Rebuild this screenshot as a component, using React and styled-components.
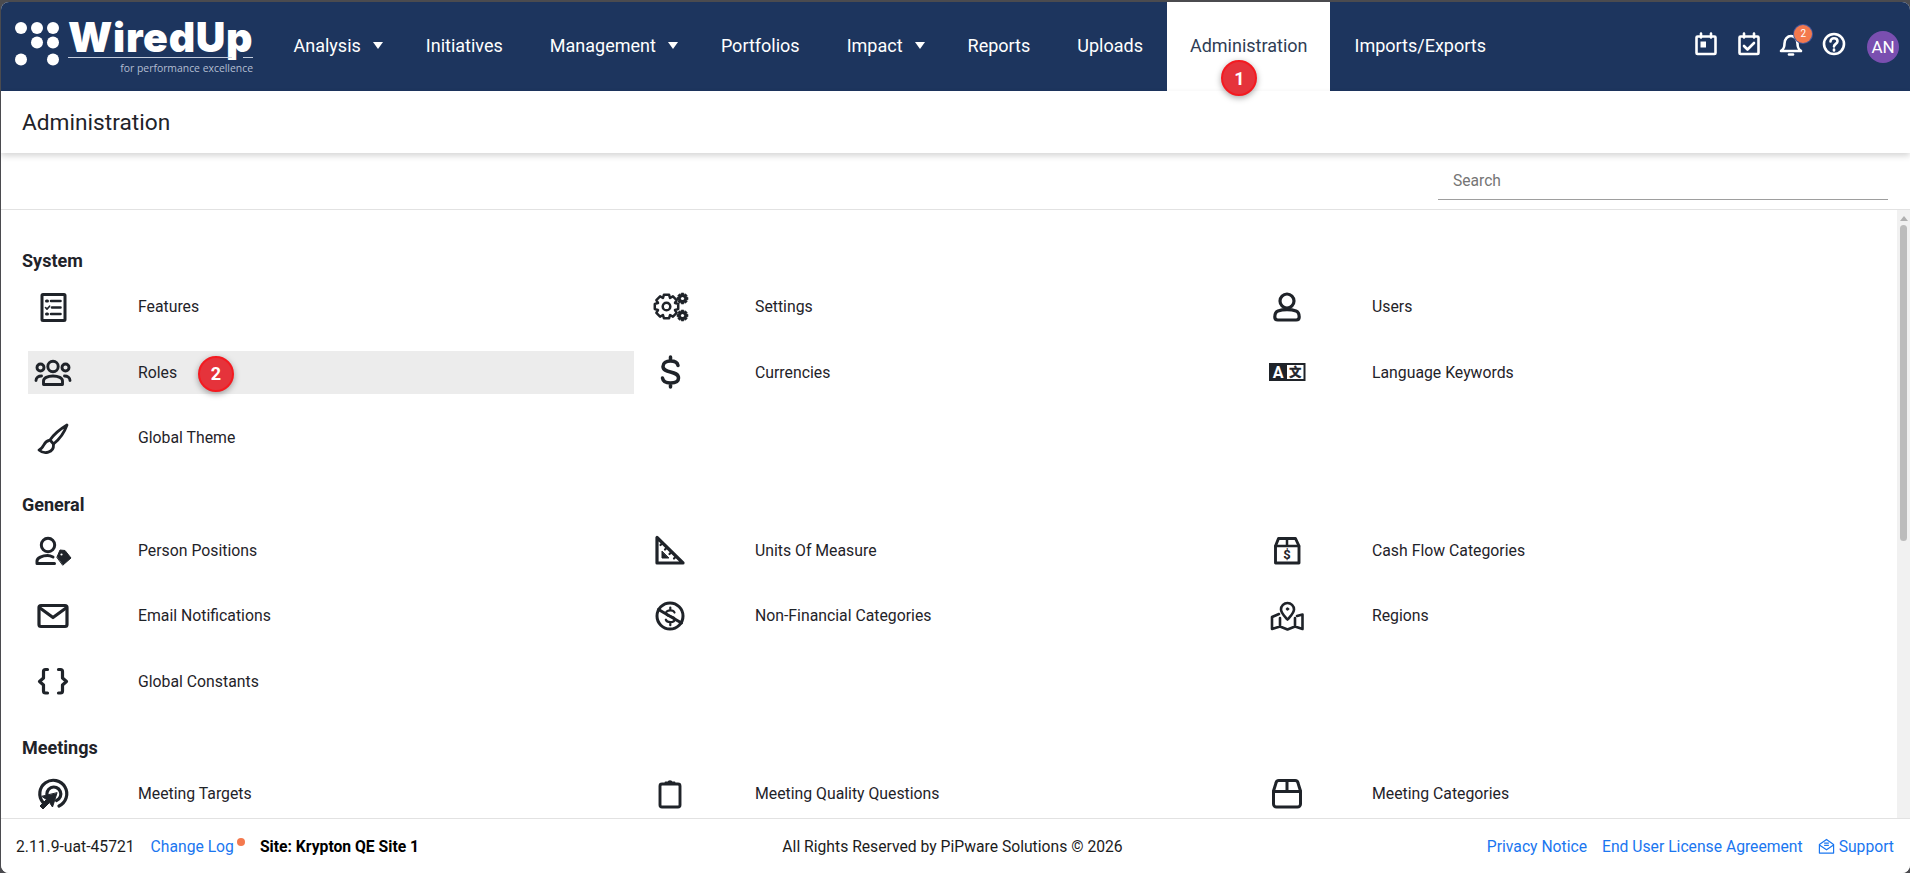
import React from "react";
import styled, { createGlobalStyle } from "styled-components";

/* WiredUp administration page: top nav, title, search, icon grid and footer. */

const INK = "#1f2329";
const NAVY = "#1d355e";
const LINK = "#1a76f0";

const GlobalStyle = createGlobalStyle`
  html, body {
    margin: 0;
    height: 100%;
    background: #4b4b4f;
    overflow: hidden;
  }
  #root {
    height: 100%;
  }
  * {
    box-sizing: border-box;
  }
`;

const LanguageGlyph = styled.text`
  fill: ${(p) => (p.$dark ? INK : "#fff")};
  stroke: ${(p) => (p.$dark ? INK : "none")};
  stroke-width: ${(p) => (p.$dark ? 0.5 : 0)};
  font-family: ${(p) => (p.$dark ? '"Noto Sans CJK SC"' : "Roboto")}, sans-serif;
  font-size: ${(p) => (p.$dark ? 12 : 16)}px;
  font-weight: 700;
  text-anchor: middle;
`;

const CashGlyph = styled.text`
  fill: ${INK};
  stroke: none;
  font-family: Roboto, sans-serif;
  font-size: 13px;
  font-weight: 700;
  text-anchor: middle;
`;

const gearPath = (cx, cy, outer, inner, teeth) => {
  const step = (Math.PI * 2) / teeth;
  const points = [];
  for (let i = 0; i < teeth; i++) {
    const a = i * step - Math.PI / 2;
    [
      [inner, -0.5],
      [outer, -0.28],
      [outer, 0.28],
      [inner, 0.5],
    ].forEach(([r, k]) => {
      const x = cx + r * Math.cos(a + k * step);
      const y = cy + r * Math.sin(a + k * step);
      points.push(`${x.toFixed(2)} ${y.toFixed(2)}`);
    });
  }
  return `M${points.join("L")}Z`;
};

const icons = {
  features: (
    <>
      <rect x="7" y="5.5" width="23" height="26" rx="1" strokeWidth="3" />
      <path d="M16 12h9.5M17 18.5h8.5M16 25h9.5" strokeWidth="2.6" />
      <path d="M11.5 12h1M11.5 25h1" strokeWidth="3" />
      <path d="M10.5 18.5l1.5 1.6 2.6-2.9" strokeWidth="1.6" />
    </>
  ),
  settings: (
    <>
      <path d={gearPath(14.5, 17.5, 12, 9.2, 8)} strokeWidth="2.5" />
      <circle cx="14.5" cy="17.5" r="3.8" strokeWidth="2.5" />
      <path d={gearPath(30.5, 9.5, 5.6, 4.1, 8)} fill={INK} strokeWidth="0.6" />
      <circle cx="30.5" cy="9.5" r="1.6" fill="#fff" stroke="none" />
      <path d={gearPath(30.5, 26.5, 5.6, 4.1, 8)} fill={INK} strokeWidth="0.6" />
      <circle cx="30.5" cy="26.5" r="1.6" fill="#fff" stroke="none" />
    </>
  ),
  users: (
    <>
      <circle cx="18" cy="12" r="7" strokeWidth="3.2" />
      <path d="M9 22c-3 1.2-3.2 3.6-3.2 6 0 2 1 3 3 3h18.4c2 0 3-1 3-3 0-2.4-.2-4.8-3.2-6-5-1.8-13-1.8-18 0z" strokeWidth="3.2" />
    </>
  ),
  roles: (
    <>
      <circle cx="18" cy="12.5" r="5.2" strokeWidth="2.9" />
      <circle cx="5.5" cy="13.5" r="3.5" strokeWidth="2.9" />
      <circle cx="30.5" cy="13.5" r="3.5" strokeWidth="2.9" />
      <path d="M8.5 30.5v-3.5c0-3 4-5 9.5-5s9.5 2 9.5 5v3.5z" strokeWidth="2.9" />
      <path d="M1 26.5c0-3 2.5-4.5 5.5-4.5M35 26.5c0-3-2.5-4.5-5.5-4.5" strokeWidth="2.9" />
    </>
  ),
  currency: (
    <path d="M26 11.5C25.5 8.5 22.5 7 18.5 7 14 7 11 9 11 12.5c0 3.5 3.5 4.5 7.5 5.5 4 1 8 2 8 6 0 3.5-3.5 5-8 5-4.5 0-7.5-1.5-8-5M18.5 3v4M18.5 29v4" strokeWidth="3.5" />
  ),
  language: (
    <>
      <rect x="0" y="9" width="36.5" height="18" fill={INK} stroke="none" />
      <rect x="18" y="11" width="16.5" height="14" fill="#fff" stroke="none" />
      <LanguageGlyph x="9" y="24" $dark={false}>
        A
      </LanguageGlyph>
      <LanguageGlyph x="26.3" y="23" $dark>
        文
      </LanguageGlyph>
    </>
  ),
  brush: (
    <>
      <path d="M32 5C27 8 19 14 15 20l3.5 4c5-4 11-12 13.5-19z" strokeWidth="2.8" />
      <path d="M14 20.5c-5.5.5-4.5 7.5-10 9.5 5 4.5 15 3 14.5-5.5" strokeWidth="2.8" />
    </>
  ),
  position: (
    <>
      <circle cx="13" cy="13" r="6.7" strokeWidth="3" />
      <path d="M18 25c-2-1-3.5-1.5-5.5-1.5-5 0-10.5 2.5-10.5 5.5v2.5h17.5" strokeWidth="3" />
      <path d="M22 25l3-7 5 .5 6 7.5-8 7z" fill={INK} strokeWidth="1" />
      <circle cx="26.5" cy="22.5" r="1.1" fill="#fff" stroke="none" />
    </>
  ),
  mail: (
    <>
      <rect x="4" y="7.5" width="28" height="21" rx="2" strokeWidth="3.2" />
      <path d="M5 10l13 9.5L31 10" strokeWidth="3.2" />
    </>
  ),
  braces: (
    <>
      <path d="M12.5 6.5H10.5a2 2 0 0 0-2 2V15l-4 3.5 4 3.5v6a2 2 0 0 0 2 2h2" strokeWidth="3.2" />
      <path d="M23.5 6.5h2a2 2 0 0 1 2 2V15l4 3.5-4 3.5v6a2 2 0 0 1-2 2h-2" strokeWidth="3.2" />
    </>
  ),
  target: (
    <>
      <path d="M8 26.5A13.5 13.5 0 1 1 24 30" strokeWidth="3.2" />
      <path d="M12.5 21A7 7 0 1 1 21.5 24.5" strokeWidth="3.2" />
      <path d="M22 17l-4.5 14-3-4.5-6.5 6.5-3-3 6.5-6.5-4.5-3z" fill={INK} strokeWidth="1" />
    </>
  ),
  ruler: (
    <>
      <path d="M5 5.5v25.5h26z" strokeWidth="3.2" />
      <path d="M10 19.5v6.5h6.5z" fill={INK} strokeWidth="1" />
      <path d="M10.5 11l-2 2M15 15.5l-2 2M19.5 20l-2 2M24 24.5l-2 2" strokeWidth="2.2" />
    </>
  ),
  noMoney: (
    <>
      <circle cx="18" cy="18" r="13" strokeWidth="3" />
      <path d="M6.5 11.5l23 13.5" strokeWidth="3" />
      <path d="M22.5 14.5c-.5-1.5-2-2.2-4.2-2.2-2.5 0-4.3 1.2-4.3 3 0 2 2 2.5 4.3 3 2.3.5 4.4 1 4.4 3 0 1.8-2 2.9-4.4 2.9-2.3 0-4-.9-4.5-2.5M18.3 9.5v3M18.3 24.2v3" strokeWidth="2.2" />
    </>
  ),
  cashBox: (
    <>
      <path d="M6.5 14l3-7.5h17l3.5 7.5v17h-23.5z" strokeWidth="2.9" />
      <path d="M6.5 14h23.5M18 6.5V14" strokeWidth="2.5" />
      <CashGlyph x="18" y="27">
        $
      </CashGlyph>
    </>
  ),
  map: (
    <>
      <path d="M18.5 21.5c-3-3.5-6.5-6.5-6.5-10a6.5 6.5 0 0 1 13 0c0 3.5-3.5 6.5-6.5 10z" strokeWidth="2.6" />
      <circle cx="18.5" cy="11" r="1.3" fill={INK} strokeWidth="0.8" />
      <path d="M10 16l-7 3v12l8-2.5 7.5 3 7.5-3 7.5 2.5V16.5L28 18M11 20v8.5M26 20v8.5" strokeWidth="2.6" />
    </>
  ),
  clipboard: (
    <>
      <rect x="8" y="8" width="20" height="23" rx="2" strokeWidth="2.9" />
      <path d="M13.5 8V6.5h2.5a2.2 2.2 0 0 1 4 0h2.5V8z" fill={INK} strokeWidth="1.8" />
    </>
  ),
  box: (
    <>
      <path d="M4.5 15V28a3 3 0 0 0 3 3h21a3 3 0 0 0 3-3V15l-2.5-8a3 3 0 0 0-3-2.5H10a3 3 0 0 0-3 2.5z" strokeWidth="3" />
      <path d="M4.5 15.5h27M18 4.5v11" strokeWidth="3" />
    </>
  ),
};

const sections = [
  {
    title: "System",
    items: [
      { label: "Features", icon: "features" },
      { label: "Settings", icon: "settings" },
      { label: "Users", icon: "users" },
      { label: "Roles", icon: "roles", active: true, marker: "2" },
      { label: "Currencies", icon: "currency" },
      { label: "Language Keywords", icon: "language" },
      { label: "Global Theme", icon: "brush" },
    ],
  },
  {
    title: "General",
    items: [
      { label: "Person Positions", icon: "position" },
      { label: "Units Of Measure", icon: "ruler" },
      { label: "Cash Flow Categories", icon: "cashBox" },
      { label: "Email Notifications", icon: "mail" },
      { label: "Non-Financial Categories", icon: "noMoney" },
      { label: "Regions", icon: "map" },
      { label: "Global Constants", icon: "braces" },
    ],
  },
  {
    title: "Meetings",
    items: [
      { label: "Meeting Targets", icon: "target" },
      { label: "Meeting Quality Questions", icon: "clipboard" },
      { label: "Meeting Categories", icon: "box" },
    ],
  },
];

const navItems = [
  { label: "Analysis", caret: true },
  { label: "Initiatives" },
  { label: "Management", caret: true },
  { label: "Portfolios" },
  { label: "Impact", caret: true },
  { label: "Reports" },
  { label: "Uploads" },
  { label: "Administration", active: true },
  { label: "Imports/Exports" },
];

const App = () => {
  return (
    <>
      <GlobalStyle />
      <Frame>
        <TopBar>
          <Logo>
            <LogoDots viewBox="0 0 48 50">
              <circle cx="6" cy="6" r="6" />
              <circle cx="22" cy="6" r="6" />
              <circle cx="38" cy="6" r="6" />
              <circle cx="22" cy="20.5" r="6" />
              <circle cx="38" cy="20.5" r="6" />
              <circle cx="6" cy="37.5" r="6" />
              <circle cx="38" cy="37.5" r="6" />
            </LogoDots>
            <LogoText>
              <LogoWord>WiredUp</LogoWord>
              <LogoRule>
                <span />
                <span />
              </LogoRule>
              <LogoTagline>for performance excellence</LogoTagline>
            </LogoText>
          </Logo>
          <NavList>
            {navItems.map((item) => (
              <NavItem key={item.label} $active={item.active} $caret={item.caret}>
                {item.label}
                {item.caret && <Caret />}
                {item.active && (
                  <Marker $left={54} $top={58}>
                    1
                  </Marker>
                )}
              </NavItem>
            ))}
          </NavList>
          <NavTools>
            <ToolIcon viewBox="0 0 24 24">
              <rect x="2.5" y="4.5" width="19" height="17.5" rx="1" />
              <path d="M7 1.5v4M17 1.5v4" />
              <rect x="6.5" y="9.5" width="5.5" height="6" fill="#fff" stroke="none" />
            </ToolIcon>
            <ToolIcon viewBox="0 0 24 24">
              <rect x="2.5" y="4.5" width="19" height="17.5" rx="1" />
              <path d="M7 1.5v4M17 1.5v4" />
              <path d="M7 14l3.5 3.5L17 11" />
            </ToolIcon>
            <Bell>
              <ToolIcon viewBox="0 0 24 24">
                <path d="M2 19c2-1.5 3.5-2.5 3.5-7.5C5.5 7 8.5 4 12 4s6.5 3 6.5 7.5c0 5 1.5 6 3.5 7.5z" />
                <path d="M10 22.5h4" />
              </ToolIcon>
              <BellCount>2</BellCount>
            </Bell>
            <ToolIcon viewBox="0 0 24 24">
              <circle cx="12" cy="12" r="10" />
              <path d="M8.5 9.5c0-2 1.5-3.3 3.5-3.3s3.5 1.2 3.5 3c0 2.6-3.5 2.7-3.5 5.3" />
              <path d="M12 17.5v1" />
            </ToolIcon>
            <Avatar>AN</Avatar>
          </NavTools>
        </TopBar>

        <PageHeader>
          <PageTitle>Administration</PageTitle>
        </PageHeader>

        <SearchBar>
          <SearchInput placeholder="Search" />
        </SearchBar>

        <Body>
          <Content>
            {sections.map((section) => (
              <section key={section.title}>
                <SectionTitle>{section.title}</SectionTitle>
                <ItemGrid>
                  {section.items.map((item) => (
                    <Item key={item.label} $active={item.active}>
                      <ItemIcon viewBox="0 0 36 36">{icons[item.icon]}</ItemIcon>
                      <ItemLabel>{item.label}</ItemLabel>
                      {item.marker && (
                        <Marker $left={170} $top={5}>
                          {item.marker}
                        </Marker>
                      )}
                    </Item>
                  ))}
                </ItemGrid>
              </section>
            ))}
          </Content>
          <ScrollTrack>
            <ScrollArrow />
            <ScrollThumb />
          </ScrollTrack>
        </Body>

        <Footer>
          <FooterLeft>
            <span>2.11.9-uat-45721</span>
            <ChangeLog>Change Log</ChangeLog>
            <SiteName>Site: Krypton QE Site 1</SiteName>
          </FooterLeft>
          <FooterCenter>All Rights Reserved by PiPware Solutions © 2026</FooterCenter>
          <FooterRight>
            <FooterLink>Privacy Notice</FooterLink>
            <FooterLink>End User License Agreement</FooterLink>
            <FooterLink>
              <SupportIcon viewBox="0 0 18 18">
                <path d="M1.5 7v9h15V7L9 1.5z" />
                <path d="M1.5 7.5L9 12.5l7.5-5" />
                <path d="M6.5 5.5h5M6.5 7.8h5" />
              </SupportIcon>
              Support
            </FooterLink>
          </FooterRight>
        </Footer>
      </Frame>
    </>
  );
};

const Frame = styled.div`
  margin: 2px 0 0 1px;
  height: calc(100% - 2px);
  display: flex;
  flex-direction: column;
  background: #fff;
  border-radius: 8px;
  overflow: hidden;
  font-family: Roboto, "Liberation Sans", sans-serif;
  color: ${INK};
`;

const TopBar = styled.header`
  flex: none;
  height: 89px;
  display: flex;
  align-items: stretch;
  background: ${NAVY};
`;

const Logo = styled.div`
  width: 269px;
  flex: none;
  display: flex;
  align-items: flex-start;
  padding: 17px 0 0 14px;
  color: #fff;
`;

const LogoDots = styled.svg`
  width: 48px;
  height: 50px;
  margin-top: 3px;
  flex: none;
  fill: #fff;
`;

const LogoText = styled.div`
  width: 185px;
  margin-left: 5px;
  display: flex;
  flex-direction: column;
`;

const LogoWord = styled.div`
  font-family: Inter, sans-serif;
  font-size: 41px;
  font-weight: 900;
  line-height: 37px;
  letter-spacing: 0.7px;
  white-space: nowrap;
`;

const LogoRule = styled.div`
  display: flex;
  justify-content: space-between;
  margin-top: 1px;

  span {
    display: block;
    height: 1px;
    background: #c4cddd;
    width: 164px;
  }

  span + span {
    width: 10px;
  }
`;

const LogoTagline = styled.div`
  margin-top: 4px;
  font-family: "Open Sans", sans-serif;
  font-size: 10.4px;
  line-height: 12px;
  text-align: right;
  color: #b3bed1;
  white-space: nowrap;
`;

const NavList = styled.nav`
  display: flex;
  align-items: stretch;
  flex: 1;
`;

const NavItem = styled.div`
  position: relative;
  display: flex;
  align-items: center;
  padding: ${(p) => (p.$caret ? "0 21.5px 2px 23.5px" : p.$active ? "0 22.5px 2px" : "0 23.5px 2px")};
  margin: ${(p) => (p.$active ? "0 1px" : "0")};
  font-size: 18px;
  color: ${(p) => (p.$active ? "#2f3d55" : "#fff")};
  background: ${(p) => (p.$active ? "#fff" : "transparent")};
  white-space: nowrap;
`;

const Caret = styled.i`
  width: 0;
  height: 0;
  margin: 0 -2px 0 12px;
  border-left: 5px solid transparent;
  border-right: 5px solid transparent;
  border-top: 7px solid #fff;
`;

const Marker = styled.span`
  position: absolute;
  left: ${(p) => p.$left}px;
  top: ${(p) => p.$top}px;
  width: 36px;
  height: 36px;
  display: flex;
  align-items: center;
  justify-content: center;
  border-radius: 50%;
  background: #e5333b;
  border: 2px solid #f41a20;
  box-shadow: 0 2px 6px rgba(0, 0, 0, 0.35);
  color: #fff;
  font-size: 18px;
  font-weight: 700;
  font-family: Roboto, sans-serif;
  z-index: 3;
`;

const NavTools = styled.div`
  display: flex;
  align-items: center;
  gap: 18.6px;
  padding: 0 11px 0 0;
`;

const ToolIcon = styled.svg`
  width: 24px;
  height: 24px;
  margin-bottom: 6px;
  fill: none;
  stroke: #fff;
  stroke-width: 2.6;
  stroke-linecap: round;
  stroke-linejoin: round;
  display: block;
`;

const Bell = styled.div`
  position: relative;
`;

const BellCount = styled.span`
  position: absolute;
  top: -7px;
  right: -9px;
  width: 18px;
  height: 18px;
  border-radius: 50%;
  background: #f4794e;
  box-shadow: 0 0 0 1px #4a5a9a;
  color: #fff;
  font-size: 10px;
  line-height: 18px;
  text-align: center;
`;

const Avatar = styled.div`
  width: 32px;
  height: 32px;
  margin-left: 2.4px;
  border-radius: 50%;
  background: #7a4fb0;
  color: #fff;
  font-size: 17px;
  display: flex;
  align-items: center;
  justify-content: center;
`;

const PageHeader = styled.div`
  position: relative;
  z-index: 2;
  flex: none;
  height: 62px;
  display: flex;
  align-items: center;
  padding: 0 21px;
  background: #fff;
  box-shadow: 0 3px 6px rgba(0, 0, 0, 0.16);
`;

const PageTitle = styled.h1`
  margin: 0;
  font-size: 22.7px;
  font-weight: 400;
  color: ${INK};
`;

const SearchBar = styled.div`
  flex: none;
  height: 57px;
  display: flex;
  justify-content: flex-end;
  padding: 0 22px 9px 0;
  border-bottom: 1px solid #e2e2e2;
`;

const SearchInput = styled.input`
  width: 450px;
  height: 37px;
  margin-top: 10px;
  padding: 0 15px;
  border: 0;
  border-bottom: 1px solid #9e9e9e;
  outline: none;
  background: transparent;
  font-family: inherit;
  font-size: 15.6px;

  &::placeholder {
    color: #757575;
    opacity: 1;
  }
`;

const Body = styled.main`
  flex: 1;
  min-height: 0;
  display: flex;
`;

const Content = styled.div`
  flex: 1;
  min-width: 0;
  overflow: hidden;
  padding: 40px 0 0 21px;
`;

const SectionTitle = styled.h2`
  margin: 0 0 13px;
  font-size: 18px;
  line-height: 22px;
  font-weight: 700;
  color: ${INK};
`;

const ItemGrid = styled.div`
  display: grid;
  grid-template-columns: repeat(3, 606px);
  grid-auto-rows: 43px;
  column-gap: 11px;
  row-gap: 22.5px;
  padding-left: 6px;
  margin-bottom: 34.5px;
`;

const Item = styled.div`
  position: relative;
  display: flex;
  align-items: center;
  padding-left: 7px;
  background: ${(p) => (p.$active ? "#ececec" : "transparent")};
`;

const ItemIcon = styled.svg`
  width: 36px;
  height: 36px;
  flex: none;
  overflow: visible;
  fill: none;
  stroke: ${INK};
  stroke-width: 3;
  stroke-linecap: round;
  stroke-linejoin: round;
`;

const ItemLabel = styled.span`
  margin-left: 67px;
  font-size: 15.8px;
  color: ${INK};
`;

const ScrollTrack = styled.div`
  flex: none;
  width: 13px;
  background: #f1f1f1;
  display: flex;
  flex-direction: column;
  align-items: center;
  padding-top: 6px;
`;

const ScrollArrow = styled.i`
  width: 0;
  height: 0;
  border-left: 4px solid transparent;
  border-right: 4px solid transparent;
  border-bottom: 5px solid #b0b0b0;
  margin-bottom: 4px;
`;

const ScrollThumb = styled.div`
  width: 7px;
  height: 316px;
  border-radius: 4px;
  background: #bcbcbc;
`;

const Footer = styled.footer`
  flex: none;
  height: 55px;
  display: grid;
  grid-template-columns: 1fr auto 1fr;
  align-items: center;
  padding: 0 16px 0 15px;
  border-top: 1px solid #e2e2e2;
  font-size: 15.7px;
  color: #1c1c1c;
  background: #fff;
`;

const FooterLeft = styled.div`
  display: flex;
  align-items: center;
  gap: 16px;
`;

const ChangeLog = styled.a`
  position: relative;
  color: ${LINK};

  &::after {
    content: "";
    position: absolute;
    top: 1px;
    right: -11px;
    width: 8px;
    height: 8px;
    border-radius: 50%;
    background: #f4794e;
  }
`;

const SiteName = styled.strong`
  margin-left: 10px;
  font-weight: 700;
  color: #000;
`;

const FooterCenter = styled.div`
  margin-left: -5px;
  text-align: center;
`;

const FooterRight = styled.div`
  display: flex;
  justify-content: flex-end;
  align-items: center;
  gap: 15px;
`;

const FooterLink = styled.a`
  display: inline-flex;
  align-items: center;
  gap: 4px;
  color: ${LINK};
`;

const SupportIcon = styled.svg`
  width: 17px;
  height: 17px;
  fill: none;
  stroke: ${LINK};
  stroke-width: 1.3;
  stroke-linejoin: round;
`;

export default App;
